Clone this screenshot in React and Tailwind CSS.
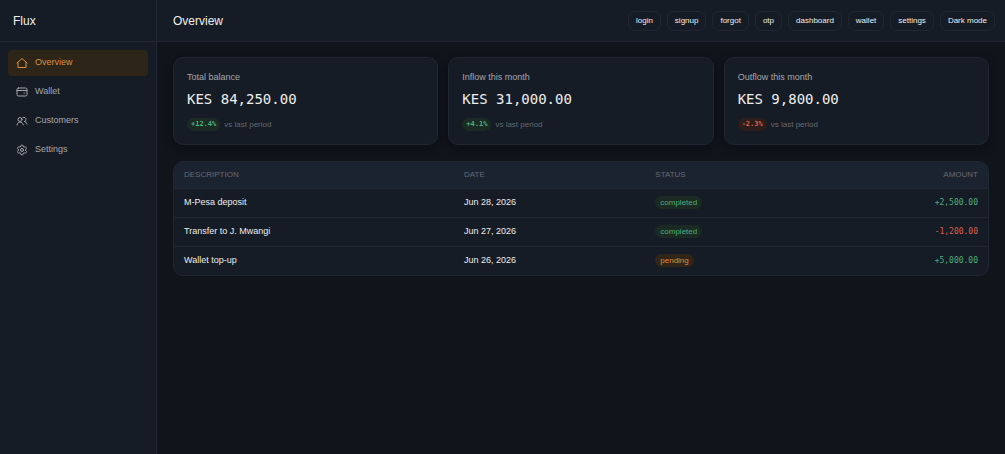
import React, { useState } from 'react';
import { Settings } from 'lucide-react';

const stroke = {
  viewBox: '0 0 24 24',
  fill: 'none',
  stroke: 'currentColor',
  strokeWidth: 2,
  strokeLinecap: 'round',
  strokeLinejoin: 'round',
};

function HomeIcon(props) {
  return (
    <svg {...stroke} {...props}>
      <path d="M2 12 12 3l10 9M4 11v10h16V11" />
    </svg>
  );
}

function CardIcon(props) {
  return (
    <svg {...stroke} {...props}>
      <rect x="2" y="4" width="20" height="16" rx="3" />
      <path d="M2 9h20M16 14h1" />
    </svg>
  );
}

function PeopleIcon(props) {
  return (
    <svg {...stroke} {...props}>
      <circle cx="8" cy="9" r="4" />
      <path d="M2 20c1-4 3-6 6-6s5 2 7 6M14 5c3-1 6 1 6 4s-2 4-4 4c3 0 5 2 6 5" />
    </svg>
  );
}

const navItems = [
  { label: 'Overview', icon: HomeIcon },
  { label: 'Wallet', icon: CardIcon },
  { label: 'Customers', icon: PeopleIcon },
  { label: 'Settings', icon: Settings },
];

const actions = ['login', 'signup', 'forgot', 'otp', 'dashboard', 'wallet', 'settings', 'Dark mode'];

const stats = [
  { label: 'Total balance', value: 'KES 84,250.00', delta: '+12.4%' },
  { label: 'Inflow this month', value: 'KES 31,000.00', delta: '+4.1%' },
  { label: 'Outflow this month', value: 'KES 9,800.00', delta: '-2.3%' },
];

const transactions = [
  { description: 'M-Pesa deposit', date: 'Jun 28, 2026', status: 'completed', amount: '+2,500.00' },
  { description: 'Transfer to J. Mwangi', date: 'Jun 27, 2026', status: 'completed', amount: '-1,200.00' },
  { description: 'Wallet top-up', date: 'Jun 26, 2026', status: 'pending', amount: '+5,000.00' },
];

const statusBadge = (s) => ({
  completed: 'bg-[#1b2a23] text-[#4caf7d]',
  pending: 'bg-[#302517] text-[#dc8f3e]',
}[s]);

function Sidebar({ active, onSelect }) {
  return (
    <aside className="flex w-[157px] shrink-0 flex-col border-r border-[#202632] bg-[#161c25]">
      <div className="flex h-[42px] items-center border-b border-[#202632] px-[13px] text-[12px] text-[#eeeeec]">Flux</div>
      <nav className="flex flex-col gap-[3px] p-2">
        {navItems.map(({ label, icon: Icon }) => (
          <a
            key={label}
            href="#"
            onClick={() => onSelect(label)}
            className={`flex h-[26px] items-center gap-[7px] rounded px-2 text-[9px] ${
              label === active ? 'bg-[#2e2519] text-[#dc8f3e]' : 'text-[#a4a7ac]'
            }`}
          >
            <Icon className="size-3" />
            {label}
          </a>
        ))}
      </nav>
    </aside>
  );
}

function StatCard({ label, value, delta }) {
  const down = delta.startsWith('-');
  return (
    <div className="rounded-[10px] border border-[#202632] bg-[#161c25] p-[13px] shadow-[0_3px_10px_rgba(0,0,0,0.3)]">
      <div className="text-[9px] leading-[13px] text-[#a4a7ac]">{label}</div>
      <div className="mt-1 font-['DejaVu_Sans_Mono',monospace] text-[14px] leading-[22px] text-[#eeeeec]">{value}</div>
      <div className="mt-2 flex items-center gap-1 text-[8px] leading-[13px] text-[#646971]">
        <span
          className={`rounded-full px-1 font-['DejaVu_Sans_Mono',monospace] text-[7px] font-bold ${
            down ? 'bg-[#2e1e1b] text-[#d9604a]' : 'bg-[#1b2a23] text-[#4caf7d]'
          }`}
        >
          {delta}
        </span>
        vs last period
      </div>
    </div>
  );
}

function TransactionTable() {
  return (
    <div className="overflow-hidden rounded-[10px] border border-[#202632] bg-[#161c25]">
      <table className="w-full table-fixed text-left text-[9px] text-[#eeeeec]">
        <thead className="bg-[#1c2330] text-[8px] text-[#646971] uppercase">
          <tr className="h-[26px]">
            <th className="w-[34.4%] px-[10px] font-normal">Description</th>
            <th className="w-[23.5%] px-[10px] font-normal">Date</th>
            <th className="px-[10px] font-normal">Status</th>
            <th className="px-[10px] text-right font-normal">Amount</th>
          </tr>
        </thead>
        <tbody>
          {transactions.map((t) => (
            <tr key={t.description} className="h-[29px] border-t border-[#202632]">
              <td className="px-[10px]">{t.description}</td>
              <td className="px-[10px]">{t.date}</td>
              <td className="px-[10px]">
                <span className={`inline-block rounded-full px-[5px] align-middle text-[8px] leading-[13px] ${statusBadge(t.status)}`}>
                  {t.status}
                </span>
              </td>
              <td
                className={`px-[10px] text-right font-['DejaVu_Sans_Mono',monospace] text-[8px] ${
                  t.amount.startsWith('-') ? 'text-[#d9604a]' : 'text-[#4caf7d]'
                }`}
              >
                {t.amount}
              </td>
            </tr>
          ))}
        </tbody>
      </table>
    </div>
  );
}

export default function App() {
  const [active, setActive] = useState('Overview');

  return (
    <div className="flex min-h-screen bg-[#10141b] font-['Liberation_Sans',Arial,sans-serif]">
      <Sidebar active={active} onSelect={setActive} />
      <div className="min-w-0 flex-1">
        <header className="flex h-[42px] items-center justify-between border-b border-[#202632] bg-[#161c25] pr-[10px] pl-4">
          <h1 className="text-[12px] text-[#eeeeec]">{active}</h1>
          <div className="flex gap-1.5">
            {actions.map((a) => (
              <button key={a} type="button" className="h-5 rounded-[7px] border border-[#202632] px-[7px] text-[8px] text-[#eeeeec]">
                {a}
              </button>
            ))}
          </div>
        </header>
        <main className="flex flex-col gap-4 px-4 py-[15px]">
          <div className="grid grid-cols-3 gap-[10px]">
            {stats.map((s) => (
              <StatCard key={s.label} {...s} />
            ))}
          </div>
          <TransactionTable />
        </main>
      </div>
    </div>
  );
}
